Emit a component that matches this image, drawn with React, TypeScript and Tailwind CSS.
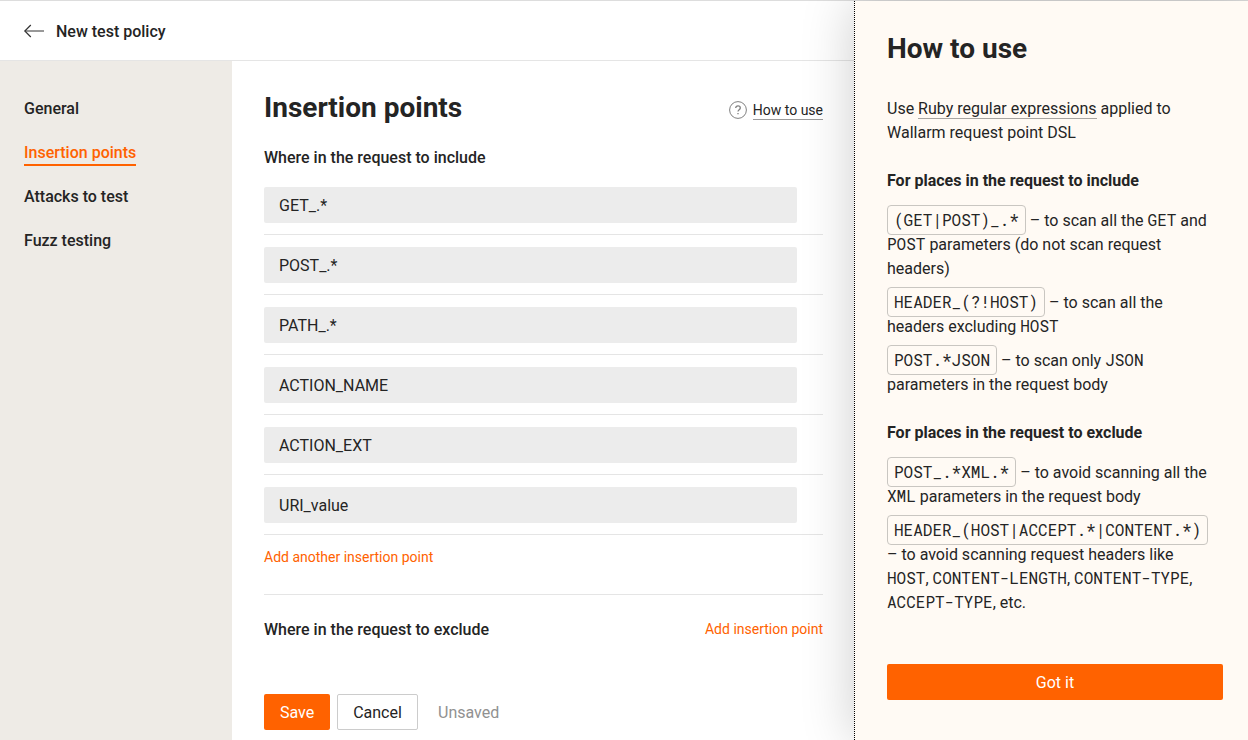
import type { ReactNode } from 'react';

const navItems = ['General', 'Insertion points', 'Attacks to test', 'Fuzz testing'];
const includePoints = ['GET_.*', 'POST_.*', 'PATH_.*', 'ACTION_NAME', 'ACTION_EXT', 'URI_value'];

function Mono({ children }: { children: ReactNode }) {
  return <span className="font-['Roboto_Mono','Liberation_Mono',monospace] leading-none">{children}</span>;
}

function Code({ children }: { children: ReactNode }) {
  return (
    <code className="rounded-[4px] border border-[#c9c6c1] px-1.5 pt-[3px] pb-1 font-['Roboto_Mono','Liberation_Mono',monospace] text-base leading-none whitespace-nowrap">
      {children}
    </code>
  );
}

function Header() {
  return (
    <header className="flex h-[61px] shrink-0 items-center border-t border-b border-t-[#dddddd] border-b-[#e5e5e5] bg-white pl-6">
      <svg className="h-4 w-5" viewBox="0 0 20 16" fill="none" stroke="#333333">
        <path d="M0.8 8H20" />
        <path d="M6.8 2L0.8 8L6.8 14" strokeWidth="1.2" />
      </svg>
      <span className="ml-3 pt-0.5 font-medium">New test policy</span>
    </header>
  );
}

function Sidebar() {
  return (
    <nav className="flex w-58 shrink-0 flex-col items-start gap-5 bg-[#eeebe6] pt-9 pl-6">
      {navItems.map((item) => (
        <a
          key={item}
          className={
            item === 'Insertion points'
              ? '-mb-px h-[25px] border-b-2 border-[#ff6200] font-medium text-[#ff6200]'
              : 'h-6 font-medium'
          }
        >
          {item}
        </a>
      ))}
    </nav>
  );
}

function HelpPanel() {
  return (
    <aside className="absolute top-px right-0 h-[739px] w-[394px] border-l border-dotted border-black bg-[#fffaf4] pt-7 pr-[25px] pl-8 shadow-[0_0_50px_rgba(0,0,0,0.2)]">
      <h2 className="text-[28px] leading-10 font-bold">How to use</h2>
      <p className="mt-7">
        Use <a className="border-b border-[#a8a5a1]">Ruby regular expressions</a> applied to
        <br />
        Wallarm request point DSL
      </p>
      <h3 className="mt-6 font-bold">For places in the request to include</h3>
      <div className="mt-4 flex flex-col gap-2.5">
        <p>
          <Code>(GET|POST)_.*</Code> – to scan all the <Mono>GET</Mono> and
          <br />
          <Mono>POST</Mono> parameters (do not scan request
          <br />
          headers)
        </p>
        <p>
          <Code>HEADER_(?!HOST)</Code> – to scan all the
          <br />
          headers excluding <Mono>HOST</Mono>
        </p>
        <p>
          <Code>POST.*JSON</Code> – to scan only <Mono>JSON</Mono>
          <br />
          parameters in the request body
        </p>
      </div>
      <h3 className="mt-6 font-bold">For places in the request to exclude</h3>
      <div className="mt-4 flex flex-col gap-2.5">
        <p>
          <Code>POST_.*XML.*</Code> – to avoid scanning all the
          <br />
          <Mono>XML</Mono> parameters in the request body
        </p>
        <p>
          <Code>HEADER_(HOST|ACCEPT.*|CONTENT.*)</Code>
          <br />– to avoid scanning request headers like
          <br />
          <Mono>HOST</Mono>, <Mono>CONTENT-LENGTH</Mono>, <Mono>CONTENT-TYPE</Mono>,
          <br />
          <Mono>ACCEPT-TYPE</Mono>, etc.
        </p>
      </div>
      <button className="mt-[49px] block h-9 w-full rounded-[2px] bg-[#ff6200] pt-px text-white">Got it</button>
    </aside>
  );
}

export default function App() {
  return (
    <div className="relative flex h-[740px] w-[1248px] flex-col overflow-hidden bg-white font-[Roboto,sans-serif] text-base leading-6 text-[#242424]">
      <Header />
      <div className="flex flex-1">
        <Sidebar />
        <main className="w-[591px] pt-[27px] pl-8">
          <div className="flex items-center justify-between">
            <h1 className="text-[28px] leading-10 font-bold">Insertion points</h1>
            <div className="flex items-center gap-1.5 pt-1">
              <svg className="h-[18px] w-[18px]" viewBox="0 0 18 18" fill="none" stroke="#808080">
                <circle cx="9" cy="9" r="8.4" />
                <path d="M6.7 7.1C6.7 5.7 7.6 4.8 9 4.8S11.3 5.6 11.3 6.9C11.3 8.6 9 8.8 9 10.5M9 12V13.2" strokeWidth="1.3" />
              </svg>
              <a className="border-b border-[#9b9b9b] text-sm leading-[18px]">How to use</a>
            </div>
          </div>
          <h2 className="mt-[18px] font-medium">Where in the request to include</h2>
          <ul className="mt-[5px]">
            {includePoints.map((point) => (
              <li key={point} className="h-15 border-b border-[#e5e5e5] pt-3">
                <div className="h-9 w-[533px] rounded-[2px] bg-[#ececec] pt-px pl-[15px] leading-9">{point}</div>
              </li>
            ))}
          </ul>
          <div className="h-15 border-b border-[#e5e5e5] pt-2.5">
            <a className="block text-sm leading-6 text-[#ff6200]">Add another insertion point</a>
          </div>
          <div className="mt-[23px] flex justify-between">
            <h2 className="font-medium">Where in the request to exclude</h2>
            <a className="-mt-px text-sm leading-6 text-[#ff6200]">Add insertion point</a>
          </div>
          <div className="mt-[52px] flex items-center">
            <button className="h-9 w-[66px] rounded-[2px] bg-[#ff6200] pt-0.5 text-white">Save</button>
            <button className="ml-[7px] h-9 w-[81px] rounded-[2px] border border-[#cccccc] bg-white pt-0.5">Cancel</button>
            <span className="ml-5 pt-0.5 text-[#919191]">Unsaved</span>
          </div>
        </main>
      </div>
      <HelpPanel />
    </div>
  );
}
